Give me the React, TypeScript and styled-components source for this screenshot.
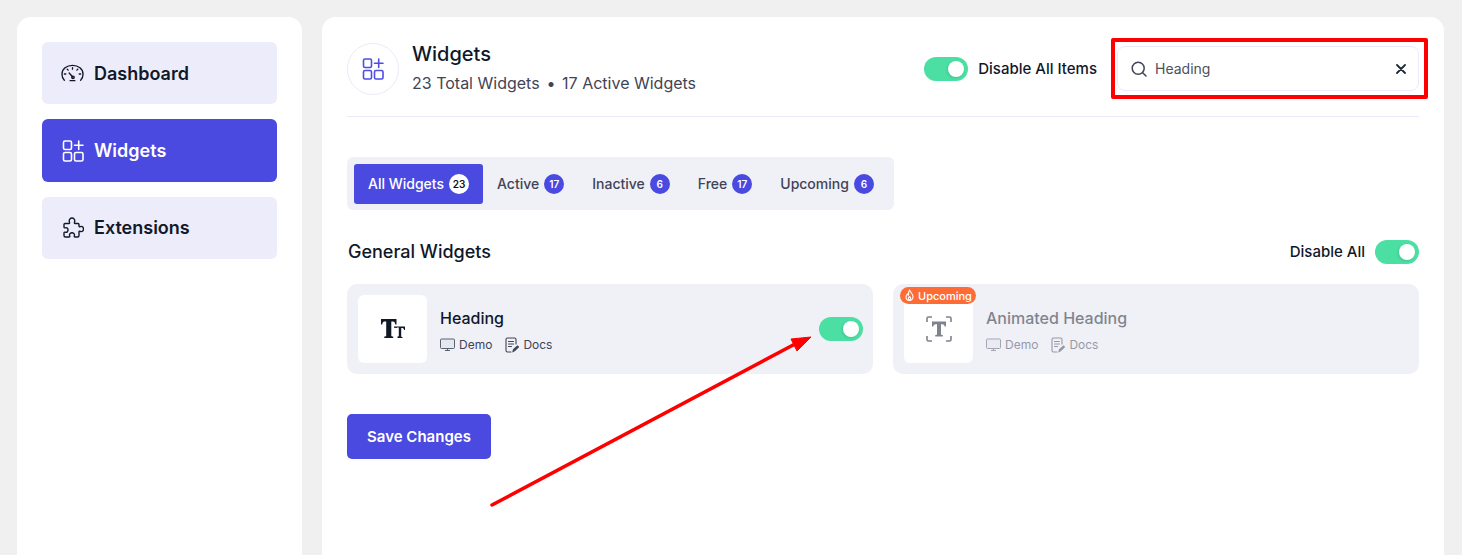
import React from 'react';
import styled, { createGlobalStyle } from 'styled-components';

const GlobalStyle = createGlobalStyle`
  html, body {
    margin: 0;
    height: 555px;
    overflow: hidden;
    background: #f0f0f0;
    font-family: Inter, "Liberation Sans", sans-serif;
    color: #0f172a;
  }
`;

const Page = styled.div`
  position: relative;
  display: flex;
  gap: 20px;
  height: 555px;
  padding: 17px 18px 0 17px;
  box-sizing: border-box;
  overflow: hidden;
`;

const Sidebar = styled.aside`
  width: 285px;
  flex: none;
  height: 600px;
  padding: 25px;
  box-sizing: border-box;
  background: #fff;
  border-radius: 14px;
  display: flex;
  flex-direction: column;
  gap: 15px;
`;

const NavItem = styled.div<{ $active?: boolean }>`
  height: 62.4px;
  padding: 0 19px;
  display: flex;
  align-items: center;
  gap: 10px;
  border-radius: 6px;
  font-size: 18px;
  font-weight: 600;
  background: ${({ $active }) => ($active ? '#4a49e0' : '#edecfa')};
  color: ${({ $active }) => ($active ? '#fff' : '#111827')};
`;

const NavIcon = styled.span`
  width: 23px;
  flex: none;
  display: flex;
  justify-content: center;
`;

const Main = styled.main`
  flex: 1;
  height: 600px;
  padding: 26px 25px;
  box-sizing: border-box;
  background: #fff;
  border-radius: 14px;
`;

const Header = styled.header`
  display: flex;
  align-items: center;
  height: 52px;
  padding-bottom: 21px;
  border-bottom: 1px solid #eceafa;
`;

const IconCircle = styled.div`
  width: 52px;
  height: 52px;
  box-sizing: border-box;
  border: 1px solid #eceafa;
  border-radius: 50%;
  display: flex;
  align-items: center;
  justify-content: center;
  color: #4f4de4;
  margin-right: 13px;
`;

const TitleBlock = styled.div`
  flex: 1;
`;

const Title = styled.div`
  font-size: 20px;
  font-weight: 500;
  line-height: 24px;
  margin-bottom: 7px;
  margin-top: -3px;
`;

const Subtitle = styled.div`
  font-size: 16px;
  line-height: 20px;
  color: #3f4456;
`;

const Dot = styled.span`
  margin: 0 6.5px 0 7px;
`;

const SwitchRow = styled.div`
  display: flex;
  align-items: center;
  gap: 10px;
  font-size: 15px;
  font-weight: 500;
  margin-right: 20px;
`;

const SwitchLabel = styled.span`
  padding-bottom: 2px;
`;

const Switch = styled.span`
  position: relative;
  display: block;
  width: 44px;
  height: 24px;
  border-radius: 12px;
  background: #4bdfa3;
  flex: none;

  &::after {
    content: '';
    position: absolute;
    top: 4px;
    right: 4px;
    width: 16px;
    height: 16px;
    border-radius: 50%;
    background: #fff;
    box-shadow: -1px 1px 3px rgba(0, 0, 0, 0.12);
  }
`;

const Search = styled.div`
  position: relative;
  width: 302px;
  height: 45px;
  margin-top: -1px;
  box-sizing: border-box;
  padding: 0 12px;
  display: flex;
  align-items: center;
  gap: 7px;
  border: 1px solid #eceafa;
  border-radius: 8px;
  font-size: 14px;
  color: #4a5060;

  &::after {
    content: '';
    position: absolute;
    top: -9px;
    right: -10px;
    bottom: -9px;
    left: -7px;
    border: 4px solid #fe0000;
    border-radius: 2px;
  }
`;

const SearchText = styled.span`
  flex: 1;
`;

const TabBar = styled.div`
  display: inline-flex;
  align-items: center;
  margin-top: 40px;
  padding: 7px 6px 7px 7px;
  height: 53px;
  box-sizing: border-box;
  background: #f0f0f7;
  border-radius: 6px;
`;

const Tab = styled.div<{ $active?: boolean }>`
  height: 40px;
  display: flex;
  align-items: center;
  gap: 5px;
  padding: 0 14px;
  border-radius: 3px;
  font-size: 14px;
  font-weight: 500;
  background: ${({ $active }) => ($active ? '#4a49e0' : 'transparent')};
  color: ${({ $active }) => ($active ? '#fff' : '#3f4456')};
`;

const Count = styled.span<{ $active?: boolean }>`
  width: 20px;
  height: 20px;
  border-radius: 50%;
  display: flex;
  align-items: center;
  justify-content: center;
  font-size: 10px;
  font-weight: 600;
  background: ${({ $active }) => ($active ? '#fff' : '#4a49e0')};
  color: ${({ $active }) => ($active ? '#111' : '#fff')};
`;

const SectionHead = styled.div`
  display: flex;
  align-items: center;
  justify-content: space-between;
  margin-top: 30px;
  height: 24px;
`;

const SectionTitle = styled.div`
  font-size: 18px;
  font-weight: 500;
  margin-left: 1px;
  padding-bottom: 2px;
`;

const DisableAll = styled.div`
  display: flex;
  align-items: center;
  gap: 10px;
  font-size: 15px;
  font-weight: 500;
`;

const CardGrid = styled.div`
  display: grid;
  grid-template-columns: 1fr 1fr;
  gap: 20px;
  margin-top: 20px;
`;

const Card = styled.div`
  position: relative;
  height: 90px;
  padding: 11px 10px 11px 11px;
  box-sizing: border-box;
  display: flex;
  align-items: flex-start;
  gap: 13px;
  background: #f0f0f7;
  border-radius: 10px;
`;

const CardIcon = styled.div`
  width: 69px;
  height: 68px;
  flex: none;
  background: #fff;
  border-radius: 6px;
  display: flex;
  align-items: center;
  justify-content: center;
`;

const CardBody = styled.div<{ $muted?: boolean }>`
  flex: 1;
  padding-top: 12px;
  opacity: ${({ $muted }) => ($muted ? 0.5 : 1)};
`;

const CardName = styled.div`
  font-size: 16px;
  font-weight: 500;
  line-height: 22px;
  margin-bottom: 8px;
`;

const CardLinks = styled.div`
  display: flex;
  gap: 13px;
  font-size: 12px;
  line-height: 16px;
  color: #3f4456;
`;

const CardLink = styled.span`
  display: flex;
  align-items: center;
  gap: 4px;
`;

const CardSwitch = styled.div`
  align-self: center;
`;

const Ribbon = styled.span`
  position: absolute;
  top: 3px;
  left: 7px;
  height: 17px;
  padding: 0 4px;
  display: flex;
  align-items: center;
  gap: 3px;
  border-radius: 9px;
  background: #ff6b35;
  color: #fff;
  font-size: 11px;
  font-weight: 500;
`;

const SaveButton = styled.button`
  display: block;
  width: 144px;
  height: 45px;
  margin-top: 40px;
  border: 0;
  border-radius: 5px;
  background: #4a49e0;
  color: #fff;
  font-family: inherit;
  font-size: 15px;
  font-weight: 600;
`;

const Arrow = styled.svg`
  position: absolute;
  left: 0;
  top: 0;
  pointer-events: none;
`;

const WidgetsIcon = ({ size = 22 }: { size?: number }) => (
  <svg width={size} height={size} viewBox="0 0 22 22" fill="none" stroke="currentColor" strokeWidth="1.6" strokeLinecap="round">
    <rect x="1.5" y="1" width="8" height="8.500" rx="1.500" />
    <rect x="1.500" y="12.500" width="8" height="8.500" rx="1.500" />
    <rect x="12.500" y="12.500" width="8.500" height="8.500" rx="1.500" />
    <path d="M16.700 1v8.500M12.500 5.200H21" />
  </svg>
);

const GaugeIcon = () => (
  <svg width="24" height="24" viewBox="0 0 24 24" fill="none" stroke="currentColor" strokeWidth="1.4" strokeLinecap="round">
    <path d="M3.500 19.500C1.900 17.800 1 15.600 1 13.200 1 7.800 5.900 4 12 4s11 3.800 11 9.200c0 2.400-.9 4.600-2.500 6.300" />
    <path d="M8.500 12l4 4.500M9.500 20h5M3.500 13h1.500M19 13h1.500M12 6.500v1.500M6.500 8l1 1M17.500 8l-1 1" />
    <circle cx="12.500" cy="16.500" r="1.300" />
  </svg>
);

const PuzzleIcon = () => (
  <svg width="22" height="22" viewBox="0 0 22 22" fill="none" stroke="currentColor" strokeWidth="1.4" strokeLinejoin="round">
    <path d="M3 6.500H7C7.500 6.500 7.800 6 7.500 5.300 6.500 2.500 8.500 1 10 1 11.500 1 13.500 2.500 12.500 5.300 12.200 6 12.500 6.500 13 6.500H16C16.600 6.500 17 6.900 17 7.500V9C17 9.800 17.500 10 18.200 9.700 20.500 8.700 21.500 10.500 21.500 12 21.500 13.500 20.500 15.300 18.200 14.300 17.500 14 17 14.200 17 15V18.500C17 19.400 16.400 20 15.500 20H13C12.300 20 12 19.500 12.300 18.800 13 17 11.500 15.800 10 15.800 8.500 15.800 7 17 7.700 18.800 8 19.500 7.700 20 7 20H3.500C2.600 20 2 19.400 2 18.500V16C2 15.300 2.500 15 3.200 15.200 5 15.800 6 14.500 6 13 6 11.500 5 10.200 3.200 10.800 2.500 11 2 10.700 2 10V7.500C2 6.900 2.400 6.500 3 6.500Z" />
  </svg>
);

const SearchIcon = () => (
  <svg width="18" height="18" viewBox="0 0 18 18" fill="none" stroke="#3f4456" strokeWidth="1.500" strokeLinecap="round">
    <circle cx="8.200" cy="8.200" r="6" />
    <path d="M12.700 12.700L16 16" />
  </svg>
);

const CloseIcon = () => (
  <svg width="10" height="10" viewBox="0 0 10 10" stroke="#1f2937" strokeWidth="1.800" strokeLinecap="round">
    <path d="M1 1l8 8M9 1L1 9" />
  </svg>
);

const MonitorIcon = () => (
  <svg width="15" height="14" viewBox="0 0 15 14" fill="none">
    <rect x="0.500" y="1" width="14" height="9.500" rx="1" fill="#e5e7ef" stroke="#5b6172" />
    <path d="M5 12.500h5M7.500 10.500v2" stroke="#5b6172" strokeWidth="1.200" />
  </svg>
);

const DocsIcon = () => (
  <svg width="14" height="16" viewBox="0 0 14 16" fill="none" stroke="#3f4456" strokeWidth="1.100" strokeLinecap="round">
    <path d="M11 7V2.500C11 1.700 10.300 1 9.500 1h-7C1.700 1 1 1.700 1 2.500v11c0 .8.700 1.500 1.500 1.500H6" />
    <path d="M3.500 4.500h5M3.500 7h5M3.500 9.500h3" />
    <path d="M8 14.500l.5-2 4-3.500 1 1-4 3.700z" fill="#3f4456" />
  </svg>
);

const TextSizeIcon = () => (
  <svg width="24" height="22" viewBox="0 0 24 22" fill="#111827">
    <path d="M0 1h15.500v5.500h-1.200c-.3-1.800-.9-3-2.300-3h-1.700v14c0 .7.400 1 1.900 1V20H3.300v-1.500c1.500 0 1.900-.3 1.900-1v-14H3.500c-1.400 0-2 1.200-2.300 3H0V1z" />
    <path d="M13 8.500h11v3.500h-1c-.2-1.200-.6-1.900-1.600-1.900h-1.200v8.100c0 .5.300.8 1.300.8V20h-5v-1.500c1 0 1.300-.3 1.300-.8v-8.100h-1.200c-.4 0-.7.100-1 .3l-2.600-.2V8.500z" />
  </svg>
);

const AnimatedTextIcon = () => (
  <svg width="26" height="26" viewBox="0 0 26 26" fill="none">
    <path d="M1 6V2.500C1 1.700 1.700 1 2.500 1H6M20 1h3.500c.8 0 1.500.7 1.500 1.500V6M25 20v3.500c0 .8-.7 1.500-1.500 1.500H20M6 25H2.500C1.700 25 1 24.300 1 23.500V20" stroke="#7f8390" strokeWidth="1.600" />
    <path d="M6 5.500h14v5h-1.300c-.3-1.500-1-2.300-2.500-2.300h-1.200V18c0 .7.500 1 1.800 1v1.500h-7.600V19c1.300 0 1.800-.3 1.800-1V8.200h-1.200c-1.500 0-2.200.8-2.500 2.300H6v-5z" fill="#7f8390" />
  </svg>
);

const FlameIcon = () => (
  <svg width="11" height="13" viewBox="0 0 11 13" fill="none" stroke="#fff" strokeWidth="1.100" strokeLinejoin="round">
    <path d="M5.500 1c.5 2 3.500 3.500 3.500 7a3.500 3.500 0 0 1-7 0c0-1.500.7-2.500 1.500-3.200.2 1 .5 1.300 1 1.500C4.300 4.500 4.500 2.500 5.500 1z" />
    <path d="M5.500 7.500c.8.800 1.200 1.300 1.200 2a1.200 1.200 0 0 1-2.400 0c0-.7.400-1.200 1.200-2z" />
  </svg>
);

const tabs = [
  { label: 'All Widgets', count: 23, active: true },
  { label: 'Active', count: 17 },
  { label: 'Inactive', count: 6 },
  { label: 'Free', count: 17 },
  { label: 'Upcoming', count: 6 },
];

const CardMeta = () => (
  <CardLinks>
    <CardLink><MonitorIcon />Demo</CardLink>
    <CardLink><DocsIcon />Docs</CardLink>
  </CardLinks>
);

export default function App() {
  return (
    <Page>
      <GlobalStyle />
      <Sidebar>
        <NavItem><NavIcon><GaugeIcon /></NavIcon>Dashboard</NavItem>
        <NavItem $active><NavIcon><WidgetsIcon /></NavIcon>Widgets</NavItem>
        <NavItem><NavIcon><PuzzleIcon /></NavIcon>Extensions</NavItem>
      </Sidebar>
      <Main>
        <Header>
          <IconCircle><WidgetsIcon /></IconCircle>
          <TitleBlock>
            <Title>Widgets</Title>
            <Subtitle>23 Total Widgets<Dot>•</Dot>17 Active Widgets</Subtitle>
          </TitleBlock>
          <SwitchRow><Switch /><SwitchLabel>Disable All Items</SwitchLabel></SwitchRow>
          <Search>
            <SearchIcon />
            <SearchText>Heading</SearchText>
            <CloseIcon />
          </Search>
        </Header>
        <TabBar>
          {tabs.map((t) => (
            <Tab key={t.label} $active={t.active}>
              {t.label}
              <Count $active={t.active}>{t.count}</Count>
            </Tab>
          ))}
        </TabBar>
        <SectionHead>
          <SectionTitle>General Widgets</SectionTitle>
          <DisableAll><SwitchLabel>Disable All</SwitchLabel><Switch /></DisableAll>
        </SectionHead>
        <CardGrid>
          <Card>
            <CardIcon><TextSizeIcon /></CardIcon>
            <CardBody>
              <CardName>Heading</CardName>
              <CardMeta />
            </CardBody>
            <CardSwitch><Switch /></CardSwitch>
          </Card>
          <Card>
            <Ribbon><FlameIcon />Upcoming</Ribbon>
            <CardIcon><AnimatedTextIcon /></CardIcon>
            <CardBody $muted>
              <CardName>Animated Heading</CardName>
              <CardMeta />
            </CardBody>
          </Card>
        </CardGrid>
        <SaveButton>Save Changes</SaveButton>
      </Main>
      <Arrow width="1462" height="555" viewBox="0 0 1462 555">
        <path d="M492 505L795 344" stroke="#fe0000" strokeWidth="3.500" strokeLinecap="round" />
        <path d="M811 337L791 339L797 351Z" fill="#fe0000" stroke="#fe0000" strokeWidth="1" />
      </Arrow>
    </Page>
  );
}
